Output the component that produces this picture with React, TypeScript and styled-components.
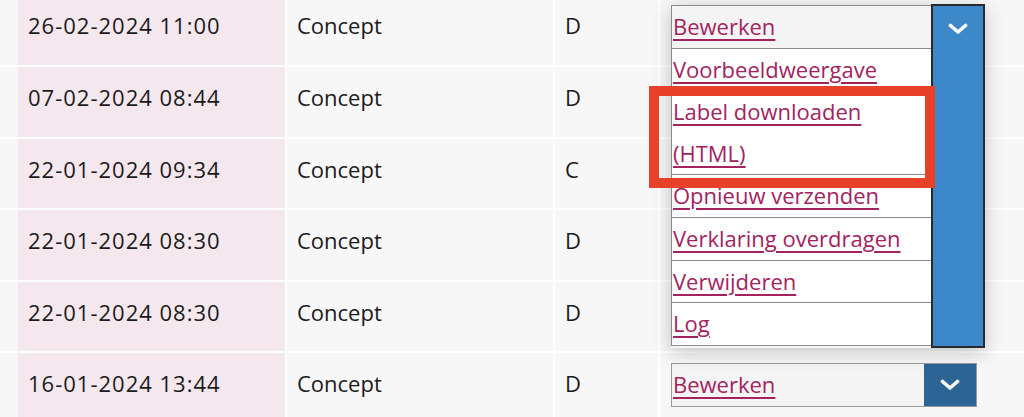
import React from "react";
import styled, { createGlobalStyle } from "styled-components";

const GlobalStyle = createGlobalStyle`
  html, body { margin: 0; padding: 0; background: #ffffff; }
  body {
    font-family: "Open Sans", "Noto Sans", sans-serif;
    color: #1b1b1b;
    overflow: hidden;
  }
`;

const Page = styled.div`
  width: 1024px;
  height: 417px;
  overflow: hidden;
`;

const Grid = styled.div`
  display: grid;
  grid-template-columns: 16px 267px 266px 103px 1fr;
  grid-auto-rows: 69.6px;
  gap: 2px;
  margin-top: -4.6px;
`;

const Cell = styled.div<{ $tone?: "plain" | "date" }>`
  background: ${(p) => (p.$tone === "date" ? "#f5e7ee" : "#f7f7f7")};
  padding: 8px 10px 0 10px;
  font-size: 22px;
  line-height: 44px;
  white-space: nowrap;
`;

const DateText = styled.span`
  letter-spacing: 1px;
`;

const ActionCell = styled(Cell)`
  position: relative;
  padding-top: 10px;
  padding-left: 11px;
`;

const Link = styled.a`
  color: #a3235f;
  text-decoration: underline;
  text-decoration-thickness: 2px;
  text-underline-offset: 4px;
  cursor: pointer;
`;

const Select = styled.div`
  display: flex;
  width: 306px;
  height: 44px;
  box-sizing: border-box;
  border: 1px solid #9a9a9a;
  background: #f4f4f4;
`;

const SelectLabel = styled.div`
  flex: 1;
  line-height: 40px;
  padding-left: 1px;
`;

const SelectButton = styled.div`
  width: 52px;
  background: #2d6496;
  display: flex;
  align-items: center;
  justify-content: center;
`;

const Menu = styled.div`
  position: absolute;
  top: 9.6px;
  left: 11px;
  z-index: 5;
  display: flex;
  align-items: flex-start;
  box-shadow: 0 4px 18px rgba(0, 0, 0, 0.22);
`;

const MenuList = styled.ul`
  list-style: none;
  margin: 0;
  padding: 0;
  width: 260px;
  box-sizing: border-box;
  border: 1px solid #8c8c8c;
  border-right: none;
  background: #ffffff;
  white-space: normal;
`;

const MenuItem = styled.li<{ $head?: boolean }>`
  position: relative;
  line-height: 41.6px;
  border-top: ${(p) => (p.$head ? "none" : "1px solid #8c8c8c")};
  background: ${(p) => (p.$head ? "#f4f4f4" : "#ffffff")};
  padding: 0 4px 0 1px;
`;

const MenuToggle = styled.div`
  width: 54px;
  height: 343.5px;
  margin-top: -1px;
  box-sizing: border-box;
  border: 2px solid #2a2a2a;
  background: #3c88c8;
  display: flex;
  justify-content: center;
  padding-top: 17px;
`;

const Highlight = styled.div`
  position: absolute;
  left: -23px;
  top: -5.4px;
  width: 286px;
  height: 102px;
  box-sizing: border-box;
  border: 10px solid #e8412a;
  z-index: 6;
  pointer-events: none;
`;

const Chevron = () => (
  <svg width="20" height="12" viewBox="0 0 20 12">
    <polyline
      points="2.5,2.5 10,9 17.5,2.5"
      fill="none"
      stroke="#ffffff"
      strokeWidth="3.6"
      strokeLinecap="round"
      strokeLinejoin="round"
    />
  </svg>
);

const rows = [
  { date: "26-02-2024 11:00", status: "Concept", cls: "D" },
  { date: "07-02-2024 08:44", status: "Concept", cls: "D" },
  { date: "22-01-2024 09:34", status: "Concept", cls: "C" },
  { date: "22-01-2024 08:30", status: "Concept", cls: "D" },
  { date: "22-01-2024 08:30", status: "Concept", cls: "D" },
  { date: "16-01-2024 13:44", status: "Concept", cls: "D" },
];

const ClosedSelect = () => (
  <Select>
    <SelectLabel>
      <Link>Bewerken</Link>
    </SelectLabel>
    <SelectButton>
      <Chevron />
    </SelectButton>
  </Select>
);

const OpenMenu = () => (
  <Menu>
    <MenuList>
      <MenuItem $head>
        <Link>Bewerken</Link>
      </MenuItem>
      <MenuItem>
        <Link>Voorbeeldweergave</Link>
      </MenuItem>
      <MenuItem>
        <Highlight />
        <Link>Label downloaden (HTML)</Link>
      </MenuItem>
      <MenuItem>
        <Link>Opnieuw verzenden</Link>
      </MenuItem>
      <MenuItem>
        <Link>Verklaring overdragen</Link>
      </MenuItem>
      <MenuItem>
        <Link>Verwijderen</Link>
      </MenuItem>
      <MenuItem>
        <Link>Log</Link>
      </MenuItem>
    </MenuList>
    <MenuToggle>
      <Chevron />
    </MenuToggle>
  </Menu>
);

export default function App() {
  const last = rows.length - 1;
  return (
    <Page>
      <GlobalStyle />
      <Grid>
        {rows.map((r, i) => (
          <React.Fragment key={i}>
            <Cell />
            <Cell $tone="date">
              <DateText>{r.date}</DateText>
            </Cell>
            <Cell>{r.status}</Cell>
            <Cell>{r.cls}</Cell>
            <ActionCell>
              {i === 0 && <OpenMenu />}
              {i === last && <ClosedSelect />}
            </ActionCell>
          </React.Fragment>
        ))}
      </Grid>
    </Page>
  );
}
